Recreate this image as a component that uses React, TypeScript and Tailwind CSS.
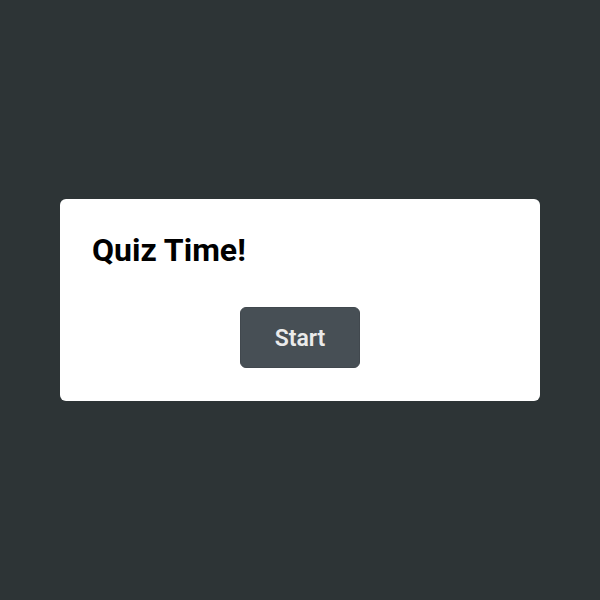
import React from 'react';

export default function App() {
  return (
    <div className="w-[600px] h-[600px] bg-[#2d3436] flex items-center justify-center font-['Roboto',sans-serif]">
      <div className="w-[480px] h-[202px] bg-white rounded-md px-8 pt-8 flex flex-col">
        <h1 className="text-[32px] leading-[38px] font-bold text-black">Quiz Time!</h1>
        <div className="flex justify-center mt-[38px]">
          <button className="w-[120px] h-[61px] pt-[3px] rounded-md border border-[#41484e] bg-[#474f55] text-[#eaeaea] text-[23px] font-semibold">
            Start
          </button>
        </div>
      </div>
    </div>
  );
}
